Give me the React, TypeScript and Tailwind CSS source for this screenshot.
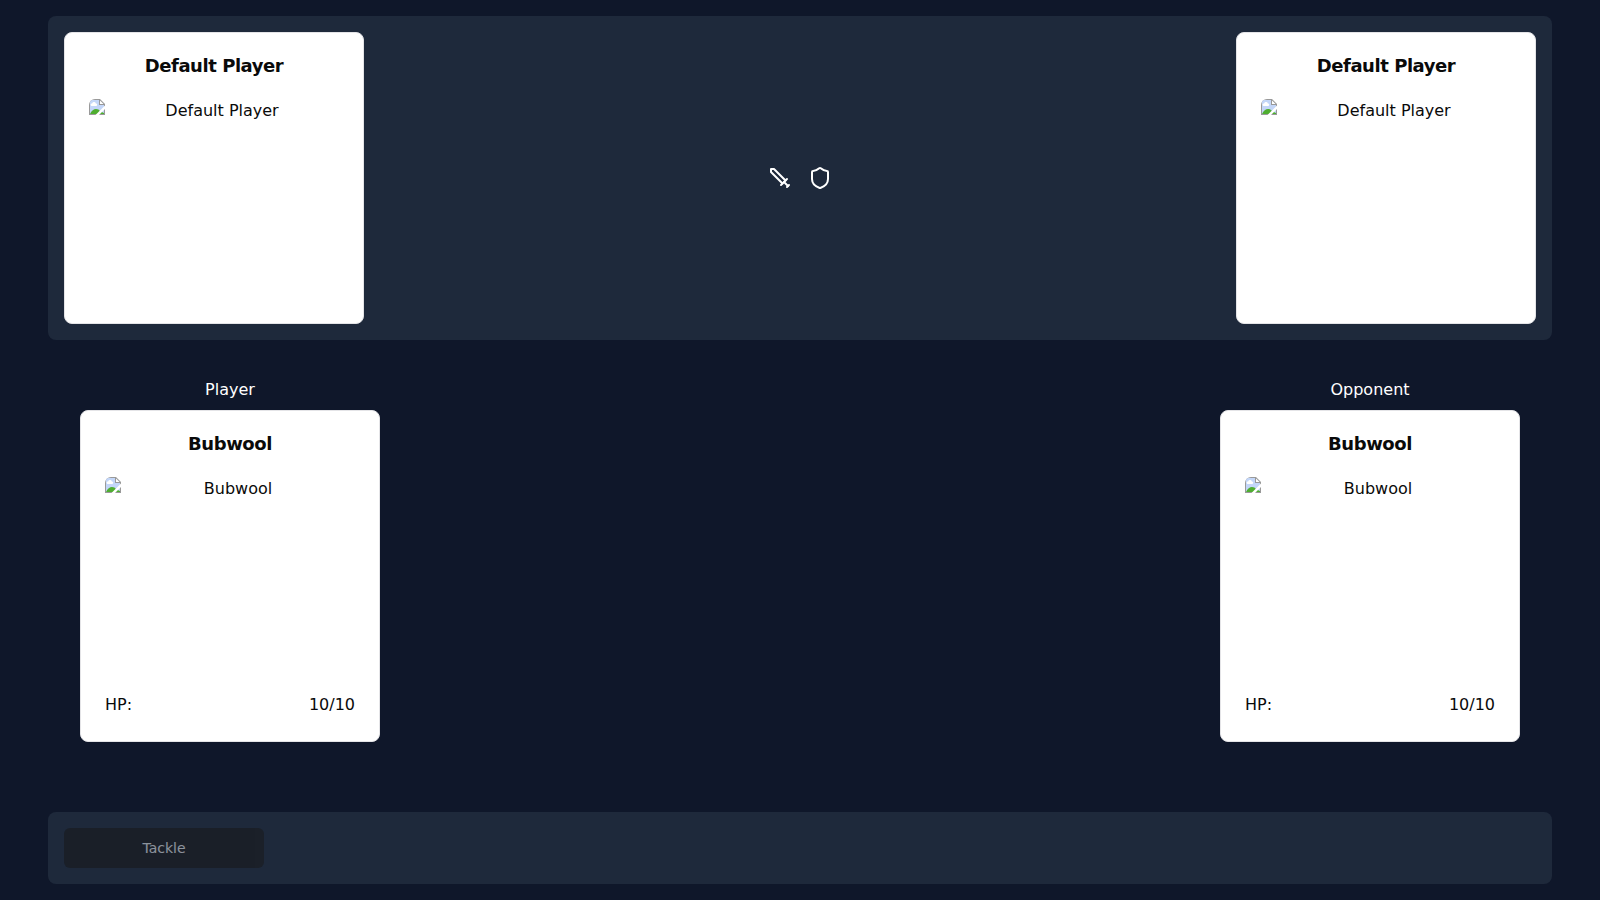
import { Shield } from "lucide-react";

type Creature = { name: string; hp: number; maxHp: number };

const creature: Creature = { name: "Bubwool", hp: 10, maxHp: 10 };
const skills = ["Tackle"];

function SwordIcon() {
  return (
    <svg
      className="size-6"
      viewBox="0 0 24 24"
      fill="none"
      stroke="currentColor"
      strokeWidth="2"
      strokeLinecap="round"
      strokeLinejoin="round"
      aria-hidden="true"
    >
      <polyline points="14.5 17.5 3 6 3 3 6 3 17.5 14.5" />
      <line x1="13" x2="19" y1="19" y2="13" />
      <line x1="16" x2="20" y1="16" y2="20" />
      <line x1="19" x2="21" y1="21" y2="19" />
    </svg>
  );
}

function MissingImageIcon() {
  return (
    <svg className="size-4 shrink-0" viewBox="0 0 16 16" aria-hidden="true">
      <path d="M0 0h11l5 5v11H0z" fill="#999" />
      <path d="M1 1h9v5h5v9H1z" fill="#c3d6f8" />
      <path d="M2.500 7a1.300 1.300 0 0 1 0-2.500h.6a2 2 0 0 1 3.800 0h.4a1.300 1.300 0 0 1 0 2.500z" fill="#fff" />
      <path d="M1 15c1.500-3.200 3.800-5 6-5 1.800 0 3.200.8 4.500 2.500L15 14v1z" fill="#4fae30" />
      <path d="M11 1.400L14.600 5H11z" fill="#fff" />
      <path d="M16 6.500V10l-6 6H6.500z" fill="#fff" />
    </svg>
  );
}

function Portrait({ name }: { name: string }) {
  return (
    <div role="img" aria-label={name} className="flex h-[200px] w-full overflow-hidden rounded-md">
      <MissingImageIcon />
      <span className="flex-1 text-center">{name}</span>
    </div>
  );
}

function Card({ name, hp }: { name: string; hp?: string }) {
  return (
    <article className="w-[300px] rounded-lg border border-zinc-200 bg-white p-6 text-neutral-950">
      <h2 className="mb-6 text-center text-lg leading-none font-bold tracking-tight">{name}</h2>
      <Portrait name={name} />
      {hp && (
        <div className="mt-4 flex justify-between">
          <span>HP:</span>
          <span>{hp}</span>
        </div>
      )}
    </article>
  );
}

function Fighter({ label, fighter }: { label: string; fighter: Creature }) {
  return (
    <section className="flex flex-col items-center gap-2 text-white">
      <p>{label}</p>
      <Card name={fighter.name} hp={`${fighter.hp}/${fighter.maxHp}`} />
    </section>
  );
}

export default function App() {
  return (
    <div className="flex min-h-screen flex-col bg-[#0f172a] px-12 py-4 font-['DejaVu_Sans',sans-serif]">
      <header className="flex items-center justify-between rounded-lg bg-[#1e293b] p-4">
        <Card name="Default Player" />
        <div className="flex gap-4 text-white">
          <SwordIcon />
          <Shield className="size-6" />
        </div>
        <Card name="Default Player" />
      </header>
      <main className="flex flex-1 items-center justify-between px-8 pb-8">
        <Fighter label="Player" fighter={creature} />
        <Fighter label="Opponent" fighter={creature} />
      </main>
      <footer className="flex gap-4 rounded-lg bg-[#1e293b] p-4">
        {skills.map((skill) => (
          <button
            key={skill}
            type="button"
            disabled
            className="h-10 w-[200px] rounded-md bg-neutral-900 text-sm font-medium text-slate-50 opacity-50"
          >
            {skill}
          </button>
        ))}
      </footer>
    </div>
  );
}
